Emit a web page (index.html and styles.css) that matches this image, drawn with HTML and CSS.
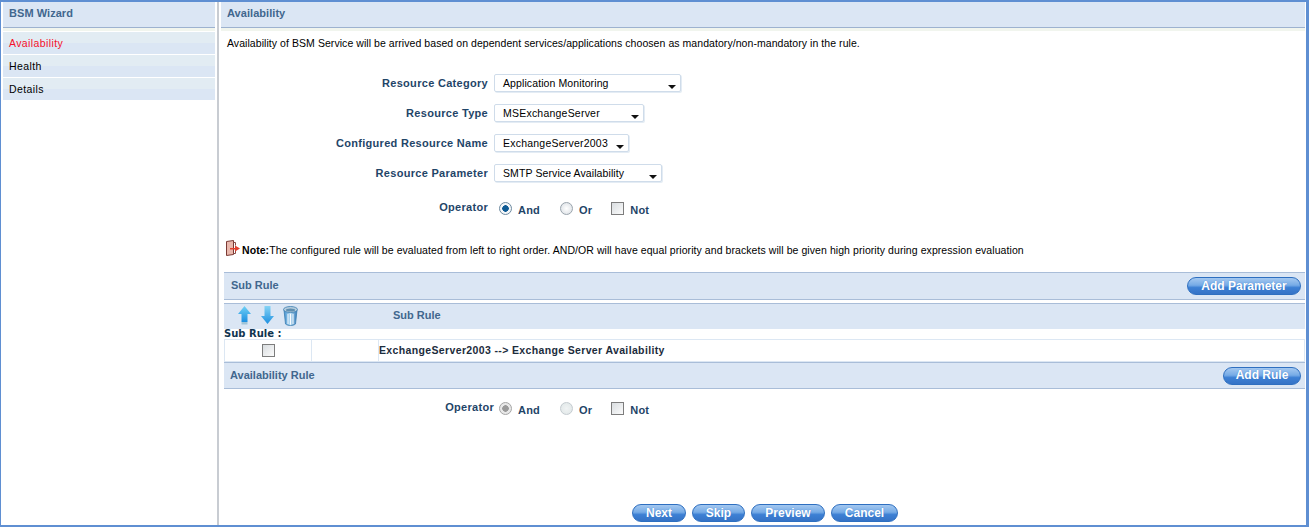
FILE: index.html
```html
<!DOCTYPE html>
<html lang="en">
<head>
<meta charset="utf-8">
<title>BSM Wizard</title>
<link rel="stylesheet" href="styles.css">
</head>
<body>
<div class="frame">
  <aside class="side">
    <div class="band head">BSM Wizard</div>
    <nav class="menu">
      <a class="item active">Availability</a>
      <a class="item">Health</a>
      <a class="item">Details</a>
    </nav>
  </aside>
  <main class="main">
    <div class="band head main-head">Availability</div>
    <p class="intro">Availability of BSM Service will be arrived based on dependent services/applications choosen as mandatory/non-mandatory in the rule.</p>
    <div class="form">
      <div class="row"><label class="lbl">Resource Category</label><div class="select w187"><span>Application Monitoring</span><i class="caret"></i></div></div>
      <div class="row"><label class="lbl">Resource Type</label><div class="select w150"><span class="wide">MSExchangeServer</span><i class="caret"></i></div></div>
      <div class="row"><label class="lbl">Configured Resource Name</label><div class="select w135"><span class="wide">ExchangeServer2003</span><i class="caret"></i></div></div>
      <div class="row"><label class="lbl">Resource Parameter</label><div class="select w168"><span>SMTP Service Availability</span><i class="caret"></i></div></div>
      <div class="row op-row"><label class="lbl op-lbl">Operator</label>
        <div class="ops">
          <span class="radio on"></span><b class="opt o1">And</b>
          <span class="radio"></span><b class="opt o2">Or</b>
          <span class="check"></span><b class="opt">Not</b>
        </div>
      </div>
    </div>
    <div class="note">
      <svg class="note-ic" width="16" height="16" viewBox="0 0 16 16"><path d="M1.500 1.500l7-1v14l-7 1z" fill="#e9b8ad" stroke="#7a3a34"/><path d="M8.500 2.500h2v3M8.500 13.500h2v-3" fill="none" stroke="#8a4a44"/><path d="M5 8h5V5.500L15 8.500l-5 3V9.500H5z" fill="#e2402e"/></svg>
      <p class="note-text"><b>Note:</b>The configured rule will be evaluated from left to right order. AND/OR will have equal priority and brackets will be given high priority during expression evaluation</p>
    </div>
    <div class="band sub"><span>Sub Rule</span><button class="btn b-param">Add Parameter</button></div>
    <div class="band tools">
      <div class="icons">
        <svg width="13" height="19" viewBox="0 0 13 19"><defs><linearGradient id="ga" x1="0" y1="0" x2="0" y2="1"><stop offset="0" stop-color="#6fd0f5"/><stop offset="1" stop-color="#1d8fe0"/></linearGradient></defs><path d="M6.500 0L13 8H9.500V16H3.500V8H0Z" fill="url(#ga)"/><path d="M3.500 16h6v2.500h-6z" fill="#9fc4d8"/></svg>
        <svg width="13" height="19" viewBox="0 0 13 19"><defs><linearGradient id="gb" x1="0" y1="0" x2="0" y2="1"><stop offset="0" stop-color="#86d4f5"/><stop offset="1" stop-color="#1d8fe0"/></linearGradient></defs><path d="M3.500 0h6v10H13L6.500 18 0 10H3.500Z" fill="url(#gb)"/></svg>
        <svg width="15" height="20" viewBox="0 0 15 20"><defs><linearGradient id="gc" x1="0" y1="0" x2="1" y2="0"><stop offset="0" stop-color="#3f8fce"/><stop offset=".5" stop-color="#bfe0f5"/><stop offset="1" stop-color="#2f78b8"/></linearGradient></defs><path d="M1 4l1.500 14c2.500 2 7.500 2 10 0L14 4z" fill="url(#gc)" stroke="#3b7db0" stroke-width=".8"/><ellipse cx="7.500" cy="3.500" rx="7" ry="3" fill="#b4cbdc" stroke="#3b7db0" stroke-width=".8"/><ellipse cx="7.500" cy="4" rx="4.500" ry="1.500" fill="#5f8fb0"/><path d="M5 8v10M7.500 8v10.500M10 8v10" stroke="#fff" stroke-width=".9"/></svg>
      </div>
      <span class="tools-title">Sub Rule</span>
    </div>
    <div class="sub-cap">Sub Rule :</div>
    <div class="rule-table">
      <div class="cell c1"><span class="check"></span></div>
      <div class="cell c2"></div>
      <div class="cell c3">ExchangeServer2003 --&gt; Exchange Server Availability</div>
    </div>
    <div class="band sub avail"><span>Availability Rule</span><button class="btn b-rule">Add Rule</button></div>
    <div class="row op2">
      <label class="lbl op-lbl lbl2">Operator</label>
      <div class="ops">
        <span class="radio on dis"></span><b class="opt o1">And</b>
        <span class="radio dis"></span><b class="opt o2">Or</b>
        <span class="check"></span><b class="opt">Not</b>
      </div>
    </div>
    <div class="footer">
      <button class="btn f1">Next</button>
      <button class="btn f2">Skip</button>
      <button class="btn f3">Preview</button>
      <button class="btn f4">Cancel</button>
    </div>
  </main>
</div>
</body>
</html>
```
FILE: styles.css
```css
* { box-sizing: border-box; }
html, body { margin: 0; padding: 0; height: 100%; background: #fff; overflow: hidden; }
body { font-family: "Liberation Sans", Arial, sans-serif; font-size: 11px; color: #000; }
.frame {
  display: flex; width: 1309px; height: 527px;
  border: 1px solid #5f8fd2; border-top-width: 2px; border-bottom-width: 2px; border-right-width: 3px;
}
.side { width: 214px; margin-left: 2px; flex: none; }
.main { flex: 1; display: flex; flex-direction: column; min-width: 0; border-left: 2px solid #c8ccd2; padding-left: 2px; padding-right: 1px; }
.band { background: #dbe6f4; color: #41678e; font-weight: bold; }
.head {
  height: 29px; padding: 5px 6px 0; font-size: 11px; border-bottom: 3px solid #f1f5ee;
  box-shadow: inset 0 -1px 0 #9db2cf; letter-spacing: .05px;
}
.side .head { margin-right: 2px; }
.menu { display: flex; flex-direction: column; gap: 1px; margin-top: 1px; margin-right: 2px; }
.item {
  display: block; height: 22px; padding: 5px 6px 0; font-size: 10.500px; line-height: 13px; letter-spacing: .4px;
  background: linear-gradient(#e2ecf3 50%, #dbe6f4 50%);
}
.item.active { color: #f5102a; }
.intro { margin: 6px 0 0 6px; font-size: 10.500px; line-height: 13px; letter-spacing: .06px; height: 13px; }
.form { margin-top: 24px; }
.row { display: flex; align-items: center; height: 18px; margin-bottom: 12px; }
.lbl { width: 267px; text-align: right; color: #1f4568; font-weight: bold; font-size: 11px; letter-spacing: .3px; flex: none; }
.select {
  display: flex; align-items: center; margin-left: 6px; height: 18px; padding-left: 8px; position: relative;
  border: 1px solid #cfdcea; box-shadow: 1px 1px 0 #e4ecf4; border-radius: 2px; font-size: 10.500px; background: #fff; letter-spacing: .1px;
}
.wide { letter-spacing: .22px; }
.caret { position: absolute; right: 4px; top: 10px; border: 4px solid transparent; border-top-color: #111; border-bottom: 0; }
.w187 { width: 187px; } .w150 { width: 150px; } .w135 { width: 135px; } .w168 { width: 168px; }
.op-row { margin-top: 19px; }
.op-lbl { align-self: flex-start; }
.ops { display: flex; align-items: center; margin-left: 11px; height: 18px; }
.opt { font-size: 11px; color: #1f4568; margin-left: 6px; letter-spacing: .2px; }
.o1 { margin-right: 20px; } .o2 { margin-right: 19px; }
.radio { width: 13px; height: 13px; border-radius: 50%; border: 1px solid #9aa4ad; background: radial-gradient(#fff, #d8dde2); flex: none; position: relative; top: -2px; }
.radio.on { background: radial-gradient(#0e5a94 0 3px, #f4f6f8 3.500px); border-color: #6d8aa0; }
.radio.dis { border-color: #c4cbd0; background: radial-gradient(#f0f3f4, #dfe6e6); }
.radio.on.dis { background: radial-gradient(#9a9a9a 0 3px, #e8e8e8 3.500px); border-color: #a5a5a5; }
.check { display: inline-block; width: 13px; height: 13px; border: 1px solid #7d7d7d; background: linear-gradient(135deg, #d9dde0, #fbfbfb); position: relative; top: -2px; flex: none; }
.note { margin: 8px 0 0 4px; height: 26px; display: flex; align-items: flex-start; }
.note-text { margin: 5px 0 0 1px; font-size: 10.500px; line-height: 13px; white-space: nowrap; letter-spacing: .07px; }
.note-ic { flex: none; margin-top: 1px; }
.sub {
  display: flex; align-items: center; justify-content: space-between; height: 28px; margin-top: 7px; margin-left: 3px;
  border-top: 1px solid #a9bdd8; border-bottom: 1px solid #a9bdd8; padding: 0 4px 0 7px;
}
.sub span { margin-top: -2px; }
.tools { display: flex; align-items: center; height: 26px; margin-top: 3px; margin-left: 3px; border-top: 1px solid #a9bdd8; position: relative; }
.icons { display: flex; gap: 10px; margin-left: 14px; margin-top: -2px; }
.icons svg:last-child { margin-left: -1px; }
.tools-title { position: absolute; left: 169px; top: 5px; }
.sub-cap { height: 10px; line-height: 10px; font-family: "DejaVu Sans", sans-serif; font-weight: bold; color: #10344f; font-size: 10px; padding-left: 3px; }
.rule-table { display: flex; height: 23px; margin-left: 3px; border: 1px solid #dce7f3; }
.cell { display: flex; align-items: center; height: 100%; }
.c1 { width: 87px; justify-content: center; border-right: 1px solid #dce7f3; }
.c1 .check { top: 0; }
.c2 { width: 67px; border-right: 1px solid #dce7f3; }
.c3 { font-weight: bold; font-size: 10.500px; color: #1c2c3c; letter-spacing: .36px; padding-bottom: 2px; }
.avail { margin-top: 0; height: 27px; padding-left: 6px; }
.op2 { margin-top: 12px; }
.lbl2 { width: 273px; }
.op2 .ops { margin-left: 5px; }
.footer { display: flex; gap: 6px; margin-top: auto; padding-left: 411px; padding-bottom: 3px; }
.btn {
  height: 18px; padding: 0; border: 1px solid #2e6fc0; border-radius: 9px; color: #fff; font: bold 12px "Liberation Sans", Arial, sans-serif;
  text-shadow: 0 0 1px #3a78c8; background: linear-gradient(#a4c8f0 0, #76abe6 45%, #3d80d4 60%, #3573c6 100%); line-height: 15px;
}
.b-param { width: 114px; } .b-rule { width: 78px; }
.f1 { width: 54px; } .f2 { width: 53px; } .f3 { width: 74px; } .f4 { width: 67px; }
```
